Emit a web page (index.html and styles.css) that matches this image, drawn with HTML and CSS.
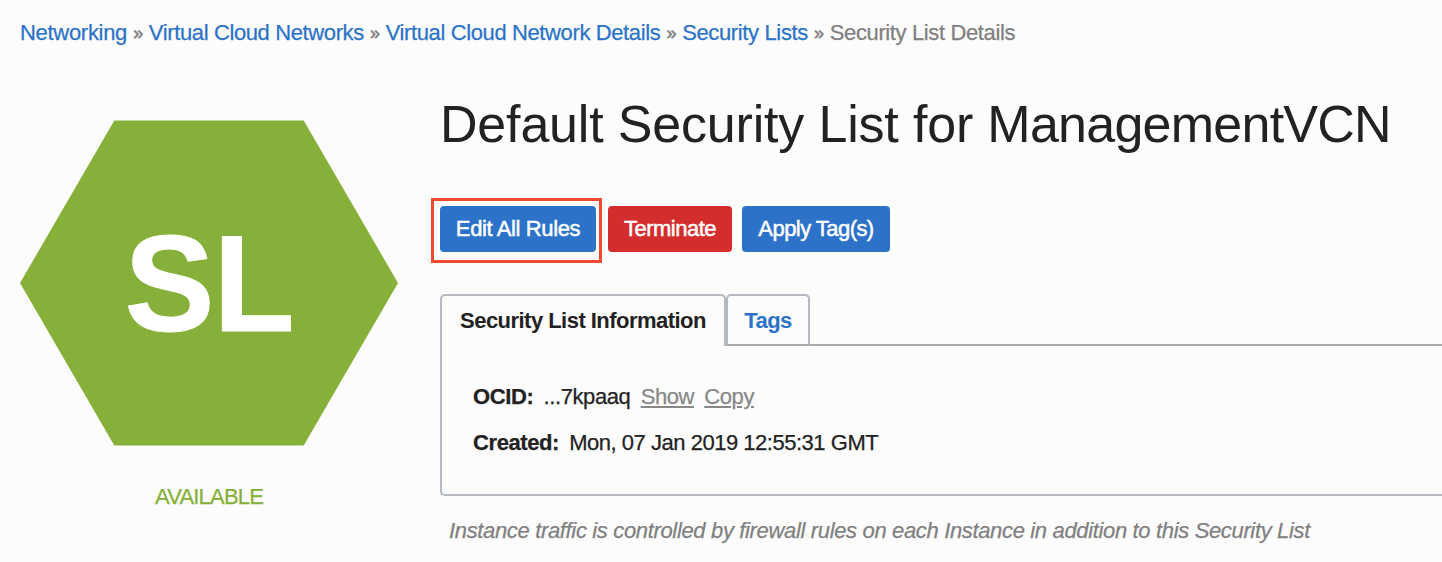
FILE: index.html
```html
<!DOCTYPE html>
<html lang="en">
<head>
<meta charset="utf-8">
<title>Security List Details</title>
<link rel="stylesheet" href="styles.css">
</head>
<body>
<nav class="breadcrumb">
<a class="c1" href="#">Networking</a><span class="sep">»</span><a class="c2" href="#">Virtual Cloud Networks</a><span class="sep">»</span><a class="c3" href="#">Virtual Cloud Network Details</a><span class="sep">»</span><a class="c4" href="#">Security Lists</a><span class="sep">»</span><span class="current">Security List Details</span>
</nav>
<div class="page">
<aside class="status">
<svg class="hexagon" width="378" height="326" viewBox="0 0 378 326">
<polygon points="94.3,0.5 283.7,0.5 378,163 283.7,325.5 94.3,325.5 0,163" fill="#86b03a"/>
<text class="initials" y="211"><tspan x="104.5" textLength="90" lengthAdjust="spacingAndGlyphs">S</tspan><tspan x="193.5" textLength="81" lengthAdjust="spacingAndGlyphs">L</tspan></text>
</svg>
<div class="state">AVAILABLE</div>
</aside>
<main class="details">
<h1>Default Security List for <span class="vcn">ManagementVCN</span></h1>
<div class="actions">
<button class="btn edit">Edit All Rules</button>
<button class="btn danger">Terminate</button>
<button class="btn tag">Apply Tag(s)</button>
</div>
<div class="tabs">
<div class="tab active"><span>Security List Information</span></div>
<div class="tab other"><span>Tags</span></div>
<div class="rule"></div>
</div>
<section class="panel">
<div class="row"><b class="k1">OCID:</b><span class="v1">...7kpaaq</span><a class="show" href="#">Show</a><a class="copy" href="#">Copy</a></div>
<div class="row"><b class="k2">Created:</b><span class="v2">Mon, 07 Jan 2019 12:55:31 GMT</span></div>
</section>
<p class="note">Instance traffic is controlled by firewall rules on each Instance in addition to this Security List</p>
</main>
</div>
</body>
</html>
```

FILE: styles.css
```css
* { box-sizing: border-box; }
body {
  margin: 0;
  height: 562px;
  overflow: hidden;
  background: #fcfcfc;
  color: #222;
  font: 22px/26px "Liberation Sans", Arial, sans-serif;
}
a { color: #2b72c8; text-decoration: none; }
.breadcrumb { display: flex; height: 46px; padding: 20px 0 0 20px; white-space: nowrap; letter-spacing: -0.38px; }
.breadcrumb, .state, .row, .note { -webkit-text-stroke: 0.25px currentColor; }
.c1 { letter-spacing: -0.3px; }
.c4 { letter-spacing: -0.36px; }
.sep { color: #808080; width: 21.8px; text-align: center; font-size: 18px; -webkit-text-stroke-width: 0.6px; }
.current { color: #808080; letter-spacing: -0.37px; }
.page { display: flex; }
.status { width: 440px; padding: 74px 0 0 20px; flex: none; }
.hexagon { display: block; }
.initials { font: bold 138px "Liberation Sans", Arial, sans-serif; fill: #fff; stroke: #fff; stroke-width: 1px; }
.state { width: 378px; margin-top: 38px; text-align: center; color: #86b03a; letter-spacing: -0.8px; }
.details { flex: 1; min-width: 0; white-space: nowrap; }
h1 { margin: 0; padding-top: 48px; height: 160px; font-size: 52px; line-height: 60px; font-weight: 400; letter-spacing: -0.18px; }
.vcn { letter-spacing: -0.75px; }
.btn {
  height: 46px; padding: 0; border: 0; border-radius: 4px; color: #fff;
  background: #2b72c8; font: 22px/46px "Liberation Sans", Arial, sans-serif;
  -webkit-text-stroke: 0.5px #fff;
}
.actions { display: flex; height: 88px; align-items: flex-start; }
.edit { position: relative; width: 156px; margin-right: 12px; letter-spacing: -0.38px; }
.edit::after { content: ""; position: absolute; inset: -8px -6px -11px -9px; border: 3px solid #ee4a30; }
.danger { width: 124px; background: #d32d2d; margin-right: 10px; letter-spacing: -0.5px; }
.tag { width: 148px; letter-spacing: -0.55px; }
.tabs { display: flex; height: 52px; font-weight: 700; line-height: 50px; letter-spacing: -0.53px; }
.tab { border: 2px solid #b4bac0; border-radius: 5px 5px 0 0; text-align: center; }
.active { width: 286px; border-bottom: 0; }
.other { width: 84px; color: #2b72c8; border-bottom-color: #aaa; }
.rule { flex: 1; border-bottom: 2px solid #aaa; }
.panel { height: 150px; border: 2px solid #b4bac0; border-width: 0 0 2px 2px; border-radius: 0 0 0 5px; padding: 38px 0 0 31px; }
.row { display: flex; height: 46px; letter-spacing: -0.4px; }
.k1, .k2, .v1, .show { margin-right: 10.2px; }
.v2 { letter-spacing: -0.48px; }
.show, .copy { color: #888; text-decoration: underline; }
.note { margin: 22px 0 0 9px; color: #808080; font-style: italic; letter-spacing: -0.345px; }
```
